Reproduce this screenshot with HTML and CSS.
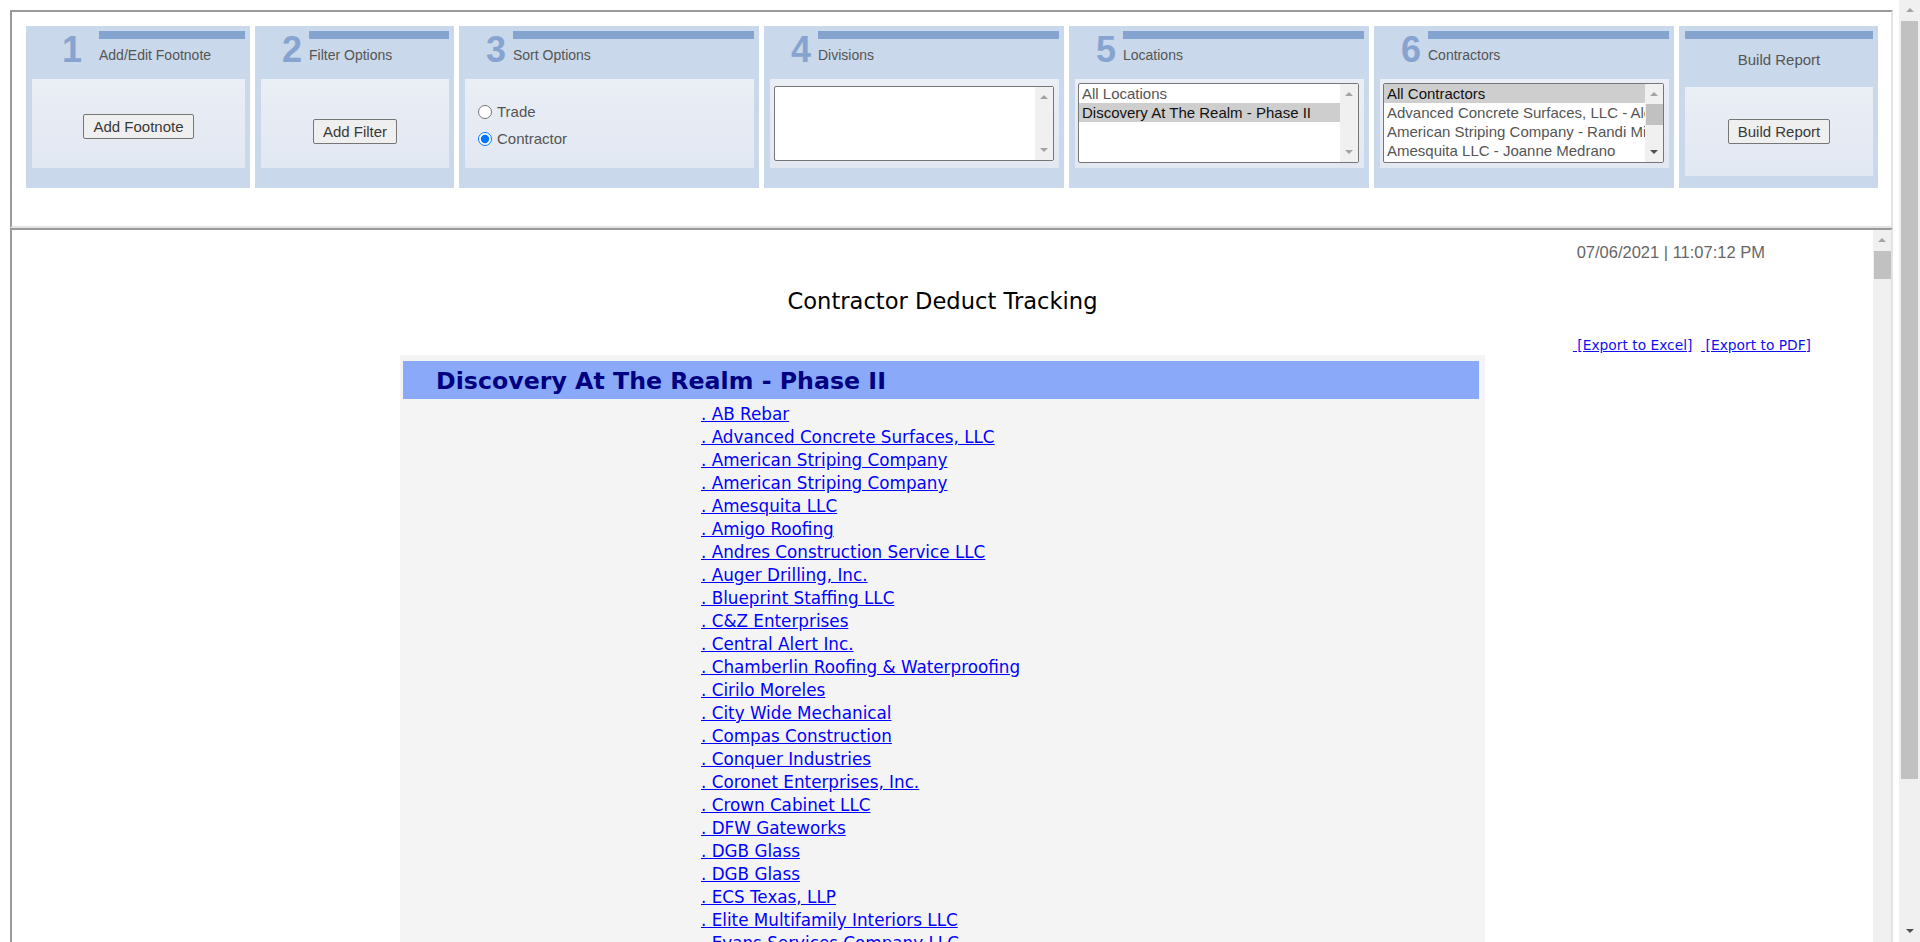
FILE: index.html
```html
<!DOCTYPE html>
<html>
<head>
<meta charset="utf-8">
<title>Contractor Deduct Tracking</title>
<link rel="stylesheet" href="styles.css">
</head>
<body>
<div class="page">
  <div class="main">
    <div class="frame top-frame">
      <div class="panels">
        <div class="panel w224">
          <div class="hdr"><div class="num n1">1</div><div class="hmain"><div class="bar"></div><div class="ptitle">Add/Edit Footnote</div></div></div>
          <div class="box btnbox p35"><button class="btn" type="button">Add Footnote</button></div>
        </div>
        <div class="panel w199">
          <div class="hdr"><div class="num">2</div><div class="hmain"><div class="bar"></div><div class="ptitle">Filter Options</div></div></div>
          <div class="box btnbox p40"><button class="btn" type="button">Add Filter</button></div>
        </div>
        <div class="panel w300">
          <div class="hdr"><div class="num">3</div><div class="hmain"><div class="bar"></div><div class="ptitle">Sort Options</div></div></div>
          <div class="box radios">
            <label class="radio"><input type="radio" name="sort">Trade</label>
            <label class="radio"><input type="radio" name="sort" checked>Contractor</label>
          </div>
        </div>
        <div class="panel w300">
          <div class="hdr"><div class="num">4</div><div class="hmain"><div class="bar"></div><div class="ptitle">Divisions</div></div></div>
          <div class="box lbbox div-box">
            <div class="listbox empty">
              <div class="opts"></div>
              <div class="lsb"><span class="sbtn"><span class="arr up dis"></span></span><span class="track"></span><span class="sbtn"><span class="arr down dis"></span></span></div>
            </div>
          </div>
        </div>
        <div class="panel w300">
          <div class="hdr"><div class="num">5</div><div class="hmain"><div class="bar"></div><div class="ptitle">Locations</div></div></div>
          <div class="box lbbox">
            <div class="listbox">
              <div class="opts">
                <div class="opt">All Locations</div>
                <div class="opt sel">Discovery At The Realm - Phase II</div>
              </div>
              <div class="lsb"><span class="sbtn"><span class="arr up dis"></span></span><span class="track"></span><span class="sbtn"><span class="arr down dis"></span></span></div>
            </div>
          </div>
        </div>
        <div class="panel w300">
          <div class="hdr"><div class="num">6</div><div class="hmain"><div class="bar"></div><div class="ptitle">Contractors</div></div></div>
          <div class="box lbbox">
            <div class="listbox">
              <div class="opts">
                <div class="opt sel">All Contractors</div>
                <div class="opt">Advanced Concrete Surfaces, LLC - Alex Moreno</div>
                <div class="opt">American Striping Company - Randi Miller</div>
                <div class="opt">Amesquita LLC - Joanne Medrano</div>
              </div>
              <div class="lsb"><span class="sbtn"><span class="arr up dis"></span></span><span class="lthumb"></span><span class="track"></span><span class="sbtn"><span class="arr down"></span></span></div>
            </div>
          </div>
        </div>
        <div class="panel w199 build">
          <div class="bar"></div>
          <div class="btitle">Build Report</div>
          <div class="box btnbox p32"><button class="btn" type="button">Build Report</button></div>
        </div>
      </div>
    </div>
    <div class="frame bottom-frame">
      <div class="report">
        <div class="date">07/06/2021 | 11:07:12 PM</div>
        <div class="rtitle">Contractor Deduct Tracking</div>
        <div class="exports"><a href="#">&nbsp;[Export to Excel]</a>&nbsp;&nbsp;<a href="#">&nbsp;[Export to PDF]</a></div>
        <div class="sheet">
          <div class="project">Discovery At The Realm - Phase II</div>
          <div class="clist">
            <div><a href="#">. AB Rebar</a></div>
            <div><a href="#">. Advanced Concrete Surfaces, LLC</a></div>
            <div><a href="#">. American Striping Company</a></div>
            <div><a href="#">. American Striping Company</a></div>
            <div><a href="#">. Amesquita LLC</a></div>
            <div><a href="#">. Amigo Roofing</a></div>
            <div><a href="#">. Andres Construction Service LLC</a></div>
            <div><a href="#">. Auger Drilling, Inc.</a></div>
            <div><a href="#">. Blueprint Staffing LLC</a></div>
            <div><a href="#">. C&amp;Z Enterprises</a></div>
            <div><a href="#">. Central Alert Inc.</a></div>
            <div><a href="#">. Chamberlin Roofing &amp; Waterproofing</a></div>
            <div><a href="#">. Cirilo Moreles</a></div>
            <div><a href="#">. City Wide Mechanical</a></div>
            <div><a href="#">. Compas Construction</a></div>
            <div><a href="#">. Conquer Industries</a></div>
            <div><a href="#">. Coronet Enterprises, Inc.</a></div>
            <div><a href="#">. Crown Cabinet LLC</a></div>
            <div><a href="#">. DFW Gateworks</a></div>
            <div><a href="#">. DGB Glass</a></div>
            <div><a href="#">. DGB Glass</a></div>
            <div><a href="#">. ECS Texas, LLP</a></div>
            <div><a href="#">. Elite Multifamily Interiors LLC</a></div>
            <div><a href="#">. Evans Services Company LLC</a></div>
          </div>
        </div>
      </div>
      <div class="fscroll">
        <span class="sbtn"><span class="arr up dis"></span></span>
        <span class="fthumb"></span>
      </div>
    </div>
  </div>
  <div class="pscroll">
    <span class="sbtn"><span class="arr up dis"></span></span>
    <span class="pthumb"></span>
    <span class="pspacer"></span>
    <span class="sbtn"><span class="arr down"></span></span>
  </div>
</div>
</body>
</html>
```
FILE: styles.css
```css
* { box-sizing: border-box; }
html, body { margin: 0; padding: 0; height: 942px; overflow: hidden; background: #fff; }
body { font-family: "Liberation Sans", Arial, sans-serif; }

.page { display: flex; height: 942px; }
.main { flex: 1; min-width: 0; display: flex; flex-direction: column; padding: 10px 6px 0 10px; }

.frame { border: 2px solid; border-color: #9a9a9a #e3e3e3 #e3e3e3 #9a9a9a; }
.top-frame { height: 218px; flex: none; padding: 14px 0 0 14px; }
.bottom-frame { flex: 1; min-height: 0; display: flex; overflow: hidden; border-bottom: none; }

/* panels */
.panels { display: flex; gap: 5px; }
.panel { flex: none; height: 162px; background: #c9d8ea; padding: 5px 5px 0 6px; }
.w224 { width: 224px; }
.w199 { width: 199px; }
.w300 { width: 300px; }
.hdr { display: flex; height: 48px; }
.num { flex: none; width: 48px; padding: 1px 0 0 21px; font: bold 36px/36px "Liberation Sans", Arial, sans-serif; color: #86a4cf; }
.num.n1 { width: 67px; padding-left: 30px; }
.hmain { flex: 1; min-width: 0; }
.bar { height: 8px; background: #84a3cf; }
.ptitle { margin-top: 8px; font-size: 14px; line-height: 16px; color: #555; white-space: nowrap; }
.btitle { height: 48px; padding-top: 12px; text-align: center; font-size: 15px; line-height: 17px; color: #555; }

.box { height: 89px; background: linear-gradient(#eaeef5, #e2e8f2); }
.btnbox { text-align: center; }
.p35 { padding-top: 35px; }
.p40 { padding-top: 40px; }
.p32 { padding-top: 32px; }
.btn { height: 25px; padding: 0 9px; margin: 0; font: 15px "Liberation Sans", Arial, sans-serif; color: #3a3a3a; background: #efefef; border: 1px solid #767676; border-radius: 2px; }

.radios { padding: 19px 0 0 13px; }
.radio { display: flex; align-items: center; gap: 5px; height: 27px; font-size: 15px; color: #555; }
.radio input { margin: 0; width: 14px; height: 14px; }

/* listboxes */
.lbbox { padding: 4px 0 0 3px; }
.div-box { padding: 7px 0 0 4px; }
.listbox { display: flex; width: 281px; height: 80px; background: #fff; border: 1px solid #767676; border-radius: 2px; overflow: hidden; }
.listbox.empty { width: 280px; height: 75px; }
.opts { flex: 1; min-width: 0; overflow: hidden; white-space: nowrap; font-size: 15px; line-height: 19px; color: #555; }
.opt { height: 19px; padding-left: 3px; }
.opt.sel { background: #cecece; color: #111; }
.lsb { flex: none; width: 18px; background: #f0f0f0; display: flex; flex-direction: column; align-items: center; }
.sbtn { flex: none; height: 20px; width: 100%; display: flex; align-items: center; justify-content: center; }
.track { flex: 1; }
.lthumb { flex: none; width: 17px; height: 21px; background: #c1c1c1; }
.arr { width: 0; height: 0; border-left: 4px solid transparent; border-right: 4px solid transparent; }
.arr.up { border-bottom: 4px solid #505050; }
.arr.down { border-top: 4px solid #505050; }
.arr.up.dis { border-bottom-color: #a3a3a3; }
.arr.down.dis { border-top-color: #a3a3a3; }

/* report frame */
.report { flex: 1; min-width: 0; overflow: hidden; }
.date { margin-top: 13px; padding-right: 108px; text-align: right; font-size: 16.5px; line-height: 19px; color: #666; }
.rtitle { margin-top: 26px; text-align: center; font: 22.6px/26px "DejaVu Sans", Verdana, sans-serif; color: #000; }
.exports { margin-top: 24px; padding-right: 62px; text-align: right; font: 13.8px/15px "DejaVu Sans", Verdana, sans-serif; }
.exports a { color: #1010ee; }
.sheet { width: 1085px; margin: 2px auto 0; padding: 6px 6px 0 3px; background: #f4f4f4; }
.project { height: 38px; padding: 6px 0 0 33px; background: #8aa9f9; font: bold 23.7px/28px "DejaVu Sans", Verdana, sans-serif; color: #000080; white-space: nowrap; }
.clist { padding: 4px 0 0 298px; font: 16.8px/23px "DejaVu Sans", Verdana, sans-serif; }
.clist a { color: #0000ff; }

.fscroll { flex: none; width: 18px; background: #f0f0f0; display: flex; flex-direction: column; align-items: center; }
.fthumb { flex: none; width: 17px; height: 28px; margin-top: 1px; background: #c1c1c1; }

/* page scrollbar */
.pscroll { flex: none; width: 21px; background: #f0f0f0; display: flex; flex-direction: column; align-items: center; }
.pthumb { flex: none; width: 17px; height: 758px; margin-top: 1px; background: #c1c1c1; }
.pspacer { flex: 1; }
.pscroll .sbtn:last-child { height: 22px; }
```
